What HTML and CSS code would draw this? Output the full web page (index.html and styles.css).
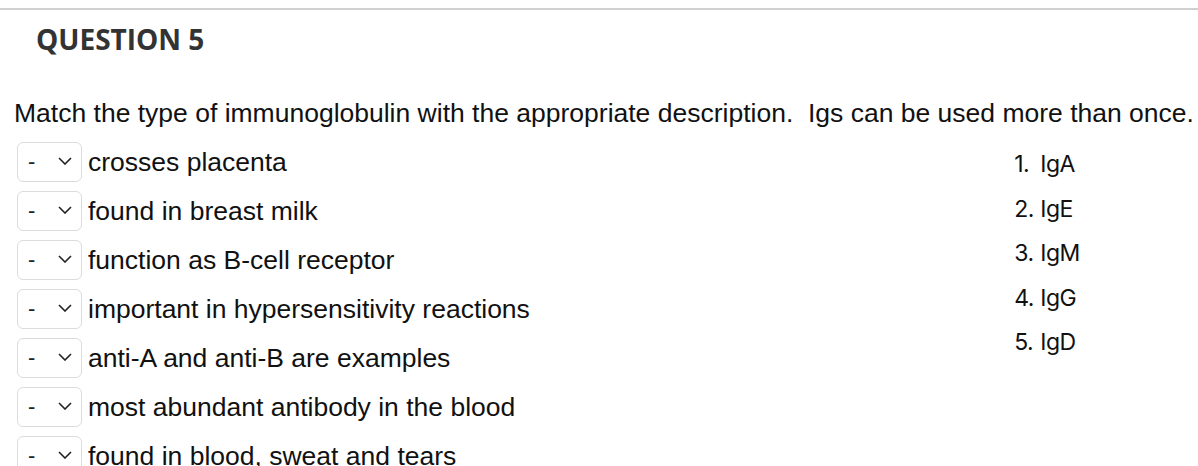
FILE: index.html
```html
<!DOCTYPE html>
<html>
<head>
<meta charset="utf-8">
<link rel="stylesheet" href="styles.css">
</head>
<body>
<div class="question">
  <h2 class="qtitle">QUESTION 5</h2>
  <p class="prompt">Match the type of immunoglobulin with the appropriate description.&nbsp; Igs can be used more than once.</p>
  <div class="match">
    <div class="items">
      <div class="row"><div class="sel"><span class="dash">-</span><svg class="chev" width="14" height="8" viewBox="0 0 14 8"><path d="M1 1 L7 7 L13 1" fill="none" stroke="#222" stroke-width="1.6"/></svg></div><span class="label">crosses placenta</span></div>
      <div class="row"><div class="sel"><span class="dash">-</span><svg class="chev" width="14" height="8" viewBox="0 0 14 8"><path d="M1 1 L7 7 L13 1" fill="none" stroke="#222" stroke-width="1.6"/></svg></div><span class="label">found in breast milk</span></div>
      <div class="row"><div class="sel"><span class="dash">-</span><svg class="chev" width="14" height="8" viewBox="0 0 14 8"><path d="M1 1 L7 7 L13 1" fill="none" stroke="#222" stroke-width="1.6"/></svg></div><span class="label">function as B-cell receptor</span></div>
      <div class="row"><div class="sel"><span class="dash">-</span><svg class="chev" width="14" height="8" viewBox="0 0 14 8"><path d="M1 1 L7 7 L13 1" fill="none" stroke="#222" stroke-width="1.6"/></svg></div><span class="label">important in hypersensitivity reactions</span></div>
      <div class="row"><div class="sel"><span class="dash">-</span><svg class="chev" width="14" height="8" viewBox="0 0 14 8"><path d="M1 1 L7 7 L13 1" fill="none" stroke="#222" stroke-width="1.6"/></svg></div><span class="label">anti-A and anti-B are examples</span></div>
      <div class="row"><div class="sel"><span class="dash">-</span><svg class="chev" width="14" height="8" viewBox="0 0 14 8"><path d="M1 1 L7 7 L13 1" fill="none" stroke="#222" stroke-width="1.6"/></svg></div><span class="label">most abundant antibody in the blood</span></div>
      <div class="row"><div class="sel"><span class="dash">-</span><svg class="chev" width="14" height="8" viewBox="0 0 14 8"><path d="M1 1 L7 7 L13 1" fill="none" stroke="#222" stroke-width="1.6"/></svg></div><span class="label">found in blood, sweat and tears</span></div>
    </div>
    <ol class="answers">
      <li><span class="num">1.</span>IgA</li>
      <li><span class="num">2.</span>IgE</li>
      <li><span class="num">3.</span>IgM</li>
      <li><span class="num">4.</span>IgG</li>
      <li><span class="num">5.</span>IgD</li>
    </ol>
  </div>
</div>
</body>
</html>
```

FILE: styles.css
```css
html, body {
  margin: 0;
  padding: 0;
  background: #fff;
}
.question {
  margin-top: 8px;
  border-top: 2px solid #d0d0d0;
  padding-left: 14px;
}
.qtitle {
  margin: 0;
  padding: 10px 0 0 22px;
  font-family: "Open Sans", sans-serif;
  font-weight: 700;
  font-size: 28px;
  line-height: 38px;
  color: #333;
}
.prompt {
  margin: 40px 0 0 0;
  font-family: "Liberation Sans", Arial, sans-serif;
  font-size: 26.5px;
  line-height: 30px;
  color: #111;
  white-space: nowrap;
}
.match {
  display: flex;
  justify-content: space-between;
  margin-top: 14px;
}
.items {
  display: flex;
  flex-direction: column;
  gap: 9px;
}
.row {
  display: flex;
  align-items: center;
  gap: 6px;
  padding-left: 3px;
}
.sel {
  width: 63px;
  height: 38px;
  border: 1px solid #dcdcdc;
  border-radius: 6px;
  display: flex;
  align-items: center;
  box-sizing: content-box;
}
.dash {
  font-family: "Liberation Sans", Arial, sans-serif;
  font-size: 22px;
  color: #222;
  margin-left: 10px;
  width: 30px;
}
.chev {
  display: block;
  margin-top: -2px;
}
.label {
  font-family: "Liberation Sans", Arial, sans-serif;
  font-size: 26.5px;
  color: #111;
}
.answers {
  list-style: none;
  margin: 0;
  padding: 0 118px 0 0;
  font-family: Inter, sans-serif;
  font-size: 23px;
  line-height: 44.5px;
  color: #111;
  letter-spacing: -0.4px;
}
.answers li {
  display: flex;
}
.num {
  width: 26px;
}
```
